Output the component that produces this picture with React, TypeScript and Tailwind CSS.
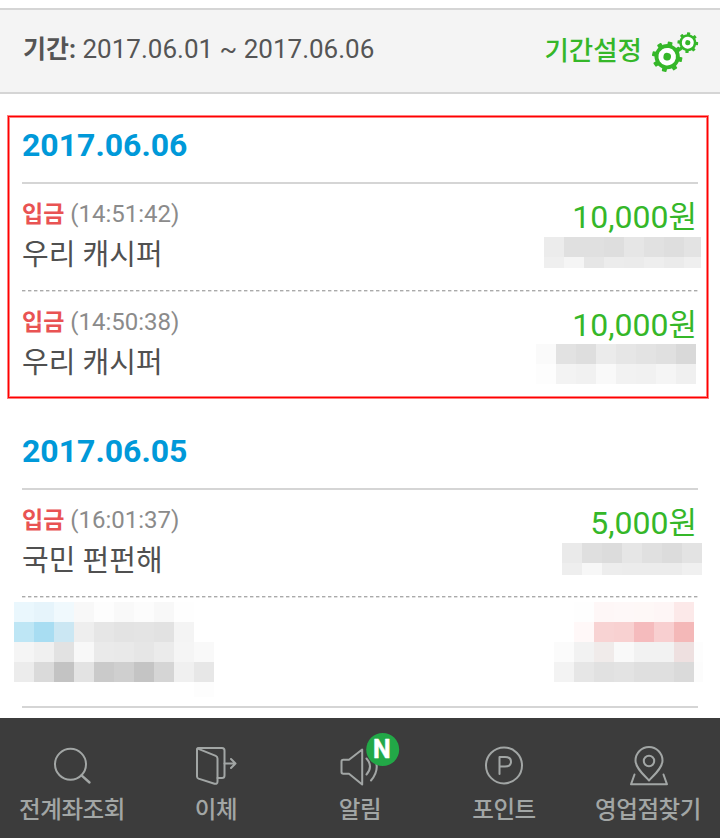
import React from "react";

type MosaicRow = { h: number; cells: string[] };

function Mosaic({ rows, lastWidth = 20, className = "" }: { rows: MosaicRow[]; lastWidth?: number; className?: string }) {
  return (
    <div className={`flex shrink-0 flex-col ${className}`} aria-hidden="true">
      {rows.map((row, r) => (
        <div key={r} className="flex" style={{ height: row.h }}>
          {row.cells.map((c, i) => (
            <span
              key={i}
              className="block h-full"
              style={{ width: i === row.cells.length - 1 ? lastWidth : 20, backgroundColor: c }}
            />
          ))}
        </div>
      ))}
    </div>
  );
}

const maskA: MosaicRow[] = [
  { h: 20, cells: ["#ececec", "#e0e0e0", "#e0e0e0", "#dedede", "#e6e6e6", "#e1e1e1", "#dedede", "#e3e3e3"] },
  { h: 11, cells: ["#efefef", "#f5f5f5", "#e6e6e6", "#ececec", "#ebebeb", "#eeeeee", "#ebebeb", "#efefef"] },
];
const maskB: MosaicRow[] = [
  { h: 20, cells: ["#fafafa", "#e2e2e2", "#dedede", "#ebebeb", "#e6e6e6", "#e3e3e3", "#e0e0e0", "#d9d9d9"] },
  { h: 20, cells: ["#fdfdfd", "#f3f3f3", "#f1f1f1", "#f9f9f9", "#f2f2f2", "#f1f1f1", "#f5f5f5", "#f0f0f0"] },
];
const maskC: MosaicRow[] = [
  { h: 20, cells: ["#eaeaea", "#dfdfdf", "#dcdcdc", "#e6e6e6", "#e0e0e0", "#dcdcdc", "#e3e3e3"] },
  { h: 12, cells: ["#eeeeee", "#f7f7f7", "#ededed", "#ececec", "#ececec", "#ececec", "#f0f0f0"] },
];
const maskLeft: MosaicRow[] = [
  { h: 20, cells: ["#eaf7fd", "#e6f4fb", "#f0f9fd", "#f8f8f8", "#fdfdfd", "#f9f9f9", "#fcfcfc", "#f8f8f8", "#fefefe", "#ffffff"] },
  { h: 20, cells: ["#bee6f5", "#a8ddf2", "#cbe7f3", "#eeeeee", "#e6e6e6", "#e3e3e3", "#e4e4e4", "#e2e2e2", "#f4f4f4", "#ffffff"] },
  { h: 20, cells: ["#f5f5f5", "#f0f0f0", "#e2e2e2", "#f8f8f8", "#eaeaea", "#e9e9e9", "#e6e6e6", "#ebebeb", "#f5f5f5", "#f9f9f9"] },
  { h: 20, cells: ["#ececec", "#dadada", "#c3c3c3", "#e3e3e3", "#cacaca", "#cfcfcf", "#c4c4c4", "#d5d5d5", "#f0f0f0", "#e7e7e7"] },
  { h: 15, cells: ["#ffffff", "#ffffff", "#ffffff", "#ffffff", "#ffffff", "#ffffff", "#ffffff", "#ffffff", "#ffffff", "#fdfdfd"] },
];
const maskRight: MosaicRow[] = [
  { h: 20, cells: ["#ffffff", "#fefefe", "#fef7f7", "#fef8f8", "#fef8f7", "#fef6f6", "#fce9e9", "#ffffff"] },
  { h: 20, cells: ["#ffffff", "#fff8f8", "#f8d3d3", "#f8d1d1", "#f5bbbd", "#f8cfd0", "#f4b8b8", "#ffffff"] },
  { h: 20, cells: ["#fbfbfb", "#f2f2f2", "#f0ebea", "#f9f9f9", "#f2f2f2", "#f2f2f2", "#eee0e0", "#fdfdfd"] },
  { h: 20, cells: ["#f3f3f3", "#e6e6e6", "#e1e1e1", "#e3e3e3", "#dfdfdf", "#dfdfdf", "#dadada", "#fcfcfc"] },
];

function Gear({ cx, cy, scale, turn }: { cx: number; cy: number; scale: number; turn: number }) {
  return (
    <g transform={`translate(${cx} ${cy}) scale(${scale}) rotate(${turn})`}>
      {[0, 45, 90, 135, 180, 225, 270, 315].map((a) => (
        <rect key={a} x="-2.4" y="-15.2" width="4.8" height="5" rx="0.8" fill="#35b729" transform={`rotate(${a})`} />
      ))}
      <circle r="10.7" fill="#fff" stroke="#35b729" strokeWidth="3.8" />
      <circle r="3.8" fill="#35b729" />
    </g>
  );
}

function Dashes() {
  return (
    <div className="flex h-[2px] flex-col justify-end bg-[repeating-linear-gradient(90deg,#aaaaaa_0_3px,#dddddd_3px_4px,#ffffff_4px_6px)]">
      <div className="h-px bg-white/60" />
    </div>
  );
}

function DateHeading({ children }: { children: string }) {
  return (
    <h2 className="flex h-[90px] items-center border-b-2 border-[#d5d5d5] pt-[13px] text-[32px] leading-none font-bold text-[#0099d9]">
      {children}
    </h2>
  );
}

type EntryProps = { time: string; name: string; amount: string; children: React.ReactNode };

function Entry({ time, name, amount, children }: EntryProps) {
  return (
    <div className="flex h-[106px] justify-between">
      <div className="pt-[14px] whitespace-nowrap">
        <p className="h-8 text-[24px] leading-8 text-[#8b8b8b]">
          <b className="text-[23px] font-bold text-[#e95353]">입금</b> {time}
        </p>
        <p className="mt-[5px] h-10 text-[29px] leading-10 text-[#505050]">{name}</p>
      </div>
      <div className="flex flex-col items-end pt-[13px]">
        <p className="h-10 pr-px text-[32px] leading-10 text-[#35b729]">
          {amount}
          <span className="text-[31px]">원</span>
        </p>
        {children}
      </div>
    </div>
  );
}

function Tab({ label, children }: { label: string; children: React.ReactNode }) {
  return (
    <div className="flex w-[144px] flex-col items-center whitespace-nowrap">
      <svg className="h-[74px] w-[144px]" viewBox="0 0 144 74" fill="none" stroke="#a2a6a5" strokeWidth="2" strokeLinecap="round" strokeLinejoin="round">
        {children}
      </svg>
      <span className="mt-[2px] h-8 text-[23.5px] leading-8 font-medium tracking-[-0.4px] text-[#a2a6a5]">{label}</span>
    </div>
  );
}

export default function App() {
  return (
    <main className="relative h-[838px] w-[720px] overflow-hidden bg-white pt-2 font-[Roboto,'Noto_Sans_CJK_KR',sans-serif]">
      <header className="flex h-[86px] items-center justify-between border-y-2 border-[#d5d5d5] bg-[#f4f4f4] pr-[20px] pl-[23px]">
        <p className="pb-[4px] text-[26px] leading-8 text-[#555]">
          <b className="text-[25px] font-bold">기간:</b> 2017.06.01 ~ 2017.06.06
        </p>
        <div className="flex items-center">
          <span className="text-[26.5px] leading-8 font-medium text-[#35b729]">기간설정</span>
          <svg className="ml-[8px] h-[46px] w-[50px]" viewBox="650 28 50 46">
            <Gear cx={667.2} cy={56.7} scale={1} turn={12} />
            <Gear cx={687.8} cy={42.7} scale={0.68} turn={5} />
          </svg>
        </div>
      </header>

      <section className="px-[22px]">
        <DateHeading>2017.06.06</DateHeading>
        <Entry time="(14:51:42)" name="우리 캐시퍼" amount="10,000">
          <Mosaic rows={maskA} lastWidth={17} className="-mr-[3px]" />
        </Entry>
        <Dashes />
        <Entry time="(14:50:38)" name="우리 캐시퍼" amount="10,000">
          <Mosaic rows={maskB} className="-mt-px mr-[2px]" />
        </Entry>
      </section>

      <section className="px-[22px] pt-[2px]">
        <DateHeading>2017.06.05</DateHeading>
        <Entry time="(16:01:37)" name="국민 펀펀해" amount="5,000">
          <Mosaic rows={maskC} className="-mr-1" />
        </Entry>
        <Dashes />
        <div className="-mr-[5px] -ml-[8px] flex h-[108px] items-start justify-between pt-1">
          <Mosaic rows={maskLeft} />
          <Mosaic rows={maskRight} lastWidth={9} />
        </div>
        <div className="h-[2px] bg-[#d5d5d5]" />
      </section>

      <nav className="mt-[10px] flex h-[120px] bg-[#3c3c3c]">
        <Tab label="전계좌조회">
          <circle cx="70.5" cy="46.3" r="15.5" />
          <path d="M81.5 57.3 89.5 64.5" strokeWidth="2.4" />
        </Tab>
        <Tab label="이체">
          <path d="M53 31.5Q53 30 54.5 30H78Q80.5 30 80.5 32.5V57.5Q80.5 60 78 60H73.5" />
          <path d="M53 31.5V58.5Q53 60 54.5 60.6L70.5 65.7Q73.5 66.5 73.5 63.5V40.5Q73.5 38.5 71.8 37.8L53.8 30.6" />
          <path d="M80.5 45.5H91.5M87 41 91.5 45.5 87 50" />
        </Tab>
        <Tab label="알림">
          <path d="M53.5 43.5Q53.5 41.8 55.2 41.8H61L74.2 31.5V66.5L61 55.8H55.2Q53.5 55.8 53.5 54Z" />
          <path d="M78.5 40.5Q85.5 48.5 78.5 56.5M83 34.5Q94.5 49 83 62.5" />
          <circle cx="94.7" cy="31.5" r="16.5" fill="#22a847" stroke="none" />
          <text className="font-[Roboto,sans-serif] text-[25px] font-bold" x="93.7" y="40.4" textAnchor="middle" fill="white" stroke="white" strokeWidth=".5">N</text>
        </Tab>
        <Tab label="포인트">
          <circle cx="72" cy="47.4" r="18" />
          <path d="M67.5 56V39H73Q79 39 79 43.7 79 48.5 73 48.5H67.5" />
        </Tab>
        <Tab label="영업점찾기">
          <path d="M73 62.5C68 57 59.5 50 59.5 42.5a13.5 13.5 0 0 1 27 0C86.5 50 78 57 73 62.5Z" />
          <circle cx="73" cy="43" r="5.2" />
          <path d="M58.5 56.5 55 66.3H91L87.5 56.5" />
        </Tab>
      </nav>

      {/* Highlight frame over the first day's deposits */}
      <div className="absolute top-[116px] left-[8px] h-[282px] w-[700px] border border-[#ff0000] shadow-[0_0_0_1px_#ff8080,inset_0_0_0_1px_#ff8080]" />
    </main>
  );
}
